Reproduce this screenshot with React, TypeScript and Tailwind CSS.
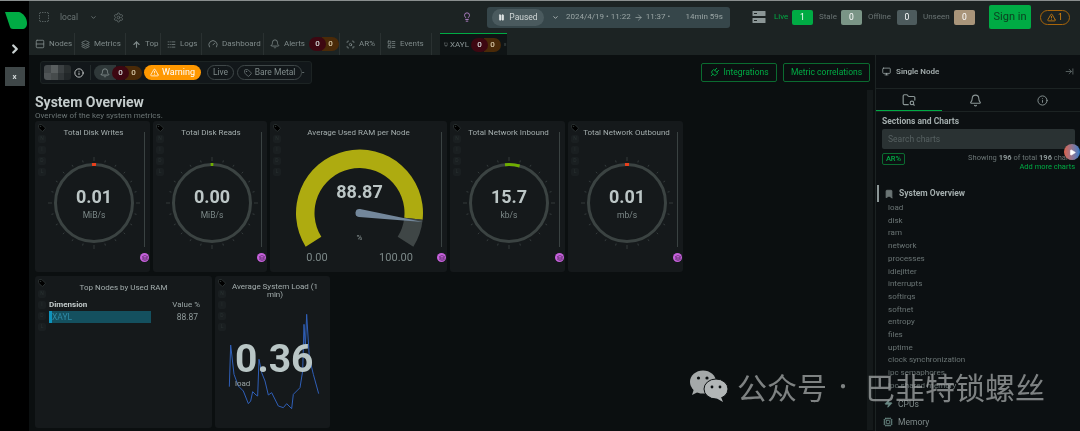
import {
  ArrowRight,
  ArrowRightToLine,
  ArrowUp,
  Bell,
  Bookmark,
  ChevronDown,
  ChevronRight,
  Cpu,
  Gauge,
  Info,
  Layers,
  Lightbulb,
  Logs,
  Pause,
  Play,
  Plug,
  Rows2,
  ScanSearch,
  Settings,
  SquareDashed,
  Tag,
  TriangleAlert,
  Zap,
  LayoutList,
  Monitor,
  GripVertical,
  FolderSearch,
} from "lucide-react";

const font = "font-['Roboto','Noto_Sans_CJK_SC',sans-serif]";

function polar(cx: number, cy: number, r: number, deg: number) {
  const a = (deg * Math.PI) / 180;
  return [cx + r * Math.sin(a), cy - r * Math.cos(a)];
}

function band(cx: number, cy: number, ro: number, ri: number, from: number, to: number) {
  const [x1, y1] = polar(cx, cy, ro, from);
  const [x2, y2] = polar(cx, cy, ro, to);
  const [x3, y3] = polar(cx, cy, ri, to);
  const [x4, y4] = polar(cx, cy, ri, from);
  const large = to - from > 180 ? 1 : 0;
  return `M${x1} ${y1}A${ro} ${ro} 0 ${large} 1 ${x2} ${y2}L${x3} ${y3}A${ri} ${ri} 0 ${large} 0 ${x4} ${y4}Z`;
}

function AlertCounts() {
  return (
    <span className="flex items-center text-[8px] font-medium text-[#d8dcdc]">
      <span className="z-10 flex h-[14px] w-[17px] items-center justify-center rounded-full bg-[#3d0711]">0</span>
      <span className="-ml-[4px] flex h-[14px] w-[17px] items-center justify-center rounded-r-full bg-[#4a2a08] text-[#d9c9a8]">0</span>
    </span>
  );
}

function NavTab({ icon, label, counts, w }: { icon: React.ReactNode; label: string; counts?: boolean; w: string }) {
  return (
    <div className={`flex h-full ${w} shrink-0 items-center gap-[4px] border-r border-[#2a3131] pl-[6px] text-[8px] text-[#7f8a8a]`}>
      {icon}
      <span>{label}</span>
      {counts && <AlertCounts />}
    </div>
  );
}

function SideIcons() {
  return (
    <div className="absolute left-[3px] top-[3px] flex flex-col items-center gap-[3px]">
      <Tag className="h-[8px] w-[8px] fill-black text-[#3a4242]" />
      {["N", "I", "D", "L"].map((k) => (
        <span key={k} className="flex h-[8px] w-[8px] items-center justify-center rounded-[2px] border border-[#20272800] bg-[#1a1f21] text-[5px] text-[#2a3232]">
          {k}
        </span>
      ))}
    </div>
  );
}

function Slider() {
  return (
    <div className="absolute bottom-[10px] right-[1px] top-[11px] flex w-[9px] flex-col items-center justify-between">
      <div className="h-[115px] w-[1px] bg-[#3a4242]" />
      <div className="flex h-[9px] w-[9px] items-center justify-center rounded-full bg-[#c661dc]">
        <Layers className="h-[6px] w-[6px] text-[#2a1530]" />
      </div>
    </div>
  );
}

function RingCard({ title, value, unit, arc, w }: { title: string; value: string; unit: string; arc: [number, number, string]; w: string }) {
  const cx = 50;
  const cy = 50;
  const ticks = Array.from({ length: 24 }, (_, i) => i * 15);
  return (
    <div className={`relative h-[151px] ${w} shrink-0 rounded-[3px] bg-[#15191b]`}>
      <SideIcons />
      <Slider />
      <div className="mt-[6px] pl-[2px] text-center text-[8px] leading-[12px] text-[#a3adad]">{title}</div>
      <div className="mt-[14px] flex justify-center pl-[3px]">
        <svg width="100" height="100" viewBox="0 0 100 100">
          {ticks.map((d) => {
            const major = d % 90 === 0;
            const [x1, y1] = polar(cx, cy, 42, d);
            const [x2, y2] = polar(cx, cy, major ? 46 : 44, d);
            return <line key={d} x1={x1} y1={y1} x2={x2} y2={y2} stroke="#4a5252" strokeWidth="0.6" />;
          })}
          <circle cx={cx} cy={cy} r="38.5" fill="none" stroke="#3b4342" strokeWidth="3" />
          <path d={band(cx, cy, 40, 37, arc[0], arc[1])} fill={arc[2]} />
          <text x={cx} y={cy} textAnchor="middle" fontSize="18" fontWeight="700" fill="#bcc6c6">
            {value}
          </text>
          <text x={cx} y={cy + 15} textAnchor="middle" fontSize="8.5" fill="#7c8888">
            {unit}
          </text>
        </svg>
      </div>
    </div>
  );
}

function RamGauge() {
  const cx = 89.5;
  const cy = 74;
  const start = -122;
  const end = 96;
  const [tx, ty] = polar(cx, cy, 64, 98);
  const [bx, by] = polar(cx, cy, 4, 8);
  const [cx2, cy2] = polar(cx, cy, 4, 188);
  return (
    <div className="relative h-[151px] w-[177px] shrink-0 rounded-[3px] bg-[#15191b]">
      <SideIcons />
      <Slider />
      <div className="mt-[6px] text-center text-[8px] leading-[12px] text-[#a3adad]">Average Used RAM per Node</div>
      <svg width="177" height="133" viewBox="0 0 177 133" className="block">
        <path d={band(cx, cy, 63.5, 45, start, end)} fill="#aeab10" />
        <path d={band(cx, cy, 63.5, 45, end, 122)} fill="#3f4646" />
        <path d={`M${bx} ${by}L${tx} ${ty}L${cx2} ${cy2}A4 4 0 0 1 ${bx} ${by}Z`} fill="#73879b" />
        <text x={cx} y="59" textAnchor="middle" fontSize="18" fontWeight="700" fill="#bcc6c6">88.87</text>
        <text x={cx} y="101" textAnchor="middle" fontSize="8" fill="#8b9696">%</text>
        <text x="47" y="122" textAnchor="middle" fontSize="11" fill="#7c8888">0.00</text>
        <text x="126" y="122" textAnchor="middle" fontSize="11" fill="#7c8888">100.00</text>
      </svg>
    </div>
  );
}

const loadPoints = [
  [598, 347], [602, 222], [612, 310], [625, 345], [640, 360], [655, 398], [662, 390], [668, 362], [678, 372], [683, 375],
  [687, 265], [695, 305], [705, 330], [715, 372], [725, 365], [745, 405], [760, 410], [770, 398], [785, 413], [790, 370],
  [810, 350], [818, 300], [822, 160], [826, 230], [830, 130], [838, 260], [850, 310], [866, 368],
];

function LoadCard() {
  const pts = loadPoints.map(([x, y]) => `${x / 3 + 30 - 215},${y / 3 + 270 - 275 - 32}`).join(" ");
  return (
    <div className="relative h-[152px] w-[115px] shrink-0 rounded-[3px] bg-[#15191b]">
      <SideIcons />
      <div className="ml-[12px] mt-[7px] w-[94px] pl-[2px] text-center text-[8px] leading-[8px] text-[#a3adad]">Average System Load (1 min)</div>
      <svg width="115" height="120" viewBox="0 0 115 120" className="mt-[9px] block">
        <polyline points={pts} fill="none" stroke="#2f5fb8" strokeWidth="1" />
      </svg>
      <div className="absolute left-[20px] top-[60px] text-[39px] font-bold leading-[46px] text-[#b9c6c6]">0.36</div>
      <div className="absolute left-[20px] top-[102px] text-[8px] text-[#9aa5a5]">load</div>
    </div>
  );
}

function TopNodesCard() {
  return (
    <div className="relative h-[152px] w-[177px] shrink-0 rounded-[3px] bg-[#15191b]">
      <SideIcons />
      <div className="mt-[6px] text-center text-[8px] leading-[12px] text-[#a3adad]">Top Nodes by Used RAM</div>
      <div className="ml-[14px] mr-[12px] mt-[5px]">
        <div className="flex items-center justify-between text-[8px] leading-[11px]">
          <span className="font-bold text-[#c4cccc]">Dimension</span>
          <span className="text-[#9aa5a5]">Value %</span>
        </div>
        <div className="mt-[1px] flex items-center justify-between">
          <div className="flex h-[12px] w-[102px] items-center border-l-[3px] border-[#0e93bd] bg-[#14505f] text-[8.5px] text-[#2e8aa6]">XAYL</div>
          <span className="pr-[2px] text-[8.5px] text-[#8f9a9a]">88.87</span>
        </div>
      </div>
    </div>
  );
}

const sections = ["load", "disk", "ram", "network", "processes", "idlejitter", "interrupts", "softirqs", "softnet", "entropy", "files", "uptime", "clock synchronization", "ipc semaphores", "ipc shared memory"];

export default function App() {
  return (
    <div className={`${font} relative flex h-[431px] w-[1080px] overflow-hidden border-t border-[#8a8f8f] bg-[#0b0f10] blur-[0.3px]`}>
      {/* left rail */}
      <div className="flex w-[29px] shrink-0 flex-col items-center bg-black pt-[11px]">
        <svg width="24" height="18" viewBox="0 0 24 18">
          <path d="M2 0H16C20 1 24 6 24 11C24 15 22 17 19 17H10C8 17 7.500 16 7 15Z" fill="#00ab44" />
        </svg>
        <ChevronRight className="mt-[12px] h-[14px] w-[14px] text-[#c8d0d0]" strokeWidth={4} />
        <div className="mt-[11px] flex h-[19px] w-[20px] items-center justify-center bg-[#3f4748] text-[8px] font-bold text-[#d0d6d6]">x</div>
      </div>

      <div className="flex min-w-0 flex-1 flex-col">
        {/* top bar */}
        <div className="flex h-[32px] shrink-0 items-center bg-[#1c2323] pl-[9px] text-[8.5px] text-[#6b7575]">
          <SquareDashed className="h-[12px] w-[12px] text-[#5d6767]" />
          <span className="ml-[10px] w-[17px]">local</span>
          <ChevronDown className="ml-[13px] h-[7px] w-[7px]" strokeWidth={3} />
          <Settings className="ml-[16px] h-[11px] w-[11px] text-[#5d6767]" />
          <Lightbulb className="ml-[338px] h-[10px] w-[10px] text-[#c08ad8]" />
          <div className="ml-[15px] flex h-[21px] w-[243px] items-center rounded-[3px] bg-[#36464a]">
            <div className="ml-[5px] flex h-[17px] w-[52px] items-center justify-center gap-[4px] rounded-full bg-[#4a5a5e] text-[8.5px] text-[#d0d6d6]">
              <Pause className="h-[7px] w-[7px] fill-[#e8ecec] text-[#e8ecec]" />
              Paused
            </div>
            <ChevronDown className="ml-[8px] h-[7px] w-[7px] text-[#b4bcbc]" strokeWidth={3} />
            <span className="ml-[7px] flex items-center gap-[3px] whitespace-nowrap text-[8px] text-[#9aa5a5]">
              2024/4/19 • 11:22 <ArrowRight className="h-[9px] w-[9px]" /> 11:37 •
            </span>
            <span className="ml-auto mr-[7px] whitespace-nowrap text-[8px] text-[#9aa5a5]">14min 59s</span>
          </div>
          <svg width="14" height="14" viewBox="0 0 14 14" className="ml-[22px] shrink-0">
            <rect x="0.500" y="1" width="13" height="5" rx="0.500" fill="#8b9696" />
            <rect x="0.500" y="8" width="13" height="5" rx="0.500" fill="#8b9696" />
            <rect x="2" y="3" width="3" height="1" fill="#1c2323" />
            <rect x="2" y="10" width="3" height="1" fill="#1c2323" />
          </svg>
          <span className="ml-[8px] w-[18px] text-[8px] text-[#00ab44]">Live</span>
          <span className="flex h-[15px] w-[21px] items-center justify-center rounded-[2px] bg-[#00ab44] text-[8.5px] text-white">1</span>
          <span className="ml-[6px] w-[22px] text-[8px]">Stale</span>
          <span className="flex h-[15px] w-[21px] items-center justify-center rounded-[2px] bg-[#7a9586] text-[8.5px] text-white">0</span>
          <span className="ml-[6px] w-[29px] text-[8px]">Offline</span>
          <span className="flex h-[15px] w-[20px] items-center justify-center rounded-[2px] bg-[#4d5b5d] text-[8.5px] text-white">0</span>
          <span className="ml-[6px] w-[31px] text-[8px]">Unseen</span>
          <span className="flex h-[15px] w-[21px] items-center justify-center rounded-[2px] bg-[#a9957a] text-[8.5px] text-white">0</span>
          <button className="ml-[14px] h-[24px] w-[42px] rounded-[2px] bg-[#00ab44] text-[11px] text-[#0b3d1f]">Sign in</button>
          <span className="ml-[9px] flex h-[15px] w-[30px] items-center justify-center gap-[2px] rounded-full border border-[#a8650a] text-[8.5px] text-[#e08a10]">
            <TriangleAlert className="h-[9px] w-[9px]" />1
          </span>
        </div>

        {/* nav tabs */}
        <div className="flex h-[22px] shrink-0 items-stretch bg-[#1c2323]">
          <NavTab w="w-[46px]" icon={<Rows2 className="h-[10px] w-[10px]" />} label="Nodes" />
          <NavTab w="w-[51px]" icon={<Layers className="h-[9px] w-[9px]" />} label="Metrics" />
          <NavTab w="w-[35px]" icon={<ArrowUp className="h-[9px] w-[9px]" strokeWidth={3} />} label="Top" />
          <NavTab w="w-[41px]" icon={<Logs className="h-[9px] w-[9px]" />} label="Logs" />
          <NavTab w="w-[62px]" icon={<Gauge className="h-[10px] w-[10px]" />} label="Dashboard" />
          <NavTab w="w-[76px]" icon={<Bell className="h-[10px] w-[10px]" />} label="Alerts" counts />
          <NavTab w="w-[41px]" icon={<ScanSearch className="h-[9px] w-[9px]" />} label="AR%" />
          <NavTab w="w-[51px]" icon={<LayoutList className="h-[9px] w-[9px]" />} label="Events" />
          <div className="ml-[8px] flex w-[67px] items-center gap-[2px] border-t border-[#00ab44] bg-[#0f1415] pl-[4px] text-[8px] text-[#8b9696]">
            <Monitor className="h-[9px] w-[9px]" />
            <span>XAYL</span>
            <AlertCounts />
            <GripVertical className="h-[9px] w-[9px] text-[#4a5252]" />
          </div>
        </div>

        <div className="flex min-h-0 flex-1">
          {/* main column */}
          <div className="w-[836px] shrink-0 pl-[6px]">
            <div className="flex h-[35px] items-center justify-between">
              <div className="ml-[5px] flex h-[23px] w-[272px] items-center gap-[3px] rounded-[3px] border border-[#1c2323] bg-[#12171a] pl-[3px] text-[8.5px] text-[#7f8a8a]">
                <div className="grid h-[15px] w-[27px] grid-cols-4 grid-rows-2 overflow-hidden rounded-[3px] opacity-70">
                  <span className="bg-[#5a5f60]" /><span className="bg-[#777c7d]" /><span className="bg-[#4d5253]" /><span className="bg-[#333839]" />
                  <span className="bg-[#6a6f70]" /><span className="bg-[#5c6162]" /><span className="bg-[#3f4445]" /><span className="bg-[#2a2f30]" />
                </div>
                <Info className="h-[10px] w-[10px] text-[#d8dcdc]" />
                <div className="ml-[3px] flex items-center border-l border-[#242b2c] pl-[3px]">
                  <span className="flex h-[15px] w-[22px] items-center justify-center rounded-l-full bg-[#2f3839]">
                    <Bell className="h-[10px] w-[10px] text-[#8b9696]" />
                  </span>
                  <div className="-ml-[4px]"><AlertCounts /></div>
                </div>
                <span className="-ml-[1px] flex h-[15px] w-[57px] items-center justify-center gap-[3px] rounded-full bg-[#ff9800] text-[9px] text-white">
                  <TriangleAlert className="h-[9px] w-[9px]" /> Warning
                </span>
                <span className="ml-[3px] flex h-[15px] w-[27px] items-center justify-center rounded-full border border-[#3f4748] text-[8.5px]">Live</span>
                <span className="flex h-[15px] w-[65px] items-center justify-center gap-[3px] rounded-full border border-[#3f4748] text-[8.5px]">
                  <Tag className="h-[8px] w-[8px]" /> Bare Metal
                </span>
                <span className="-ml-[3px]">-</span>
              </div>
              <div className="-mr-[5px] flex gap-[6px] text-[8.5px] text-[#00ab44]">
                <div className="flex h-[19px] w-[76px] items-center justify-center gap-[3px] rounded-[2px] border border-[#0b6b30]">
                  <Plug className="h-[11px] w-[11px] rotate-45" /> Integrations
                </div>
                <div className="flex h-[19px] w-[87px] items-center justify-center rounded-[2px] border border-[#0b6b30]">Metric correlations</div>
              </div>
            </div>
            <h1 className="mt-[3px] text-[14px] font-bold leading-[18px] text-[#c4cccc]">System Overview</h1>
            <p className="mt-[1px] text-[8px] leading-[8px] text-[#6b7575]">Overview of the key system metrics.</p>
            <div className="mt-[1px] flex gap-[3px]">
              <RingCard title="Total Disk Writes" value="0.01" unit="MiB/s" arc={[-3, 3, "#e8401c"]} w="w-[115px]" />
              <RingCard title="Total Disk Reads" value="0.00" unit="MiB/s" arc={[-2, 2, "#6fae00"]} w="w-[114px]" />
              <RamGauge />
              <RingCard title="Total Network Inbound" value="15.7" unit="kb/s" arc={[-6, 16, "#6fae00"]} w="w-[115px]" />
              <RingCard title="Total Network Outbound" value="0.01" unit="mb/s" arc={[-3, 3, "#e8401c"]} w="w-[115px]" />
            </div>
            <div className="mt-[4px] flex gap-[3px]">
              <TopNodesCard />
              <LoadCard />
            </div>
          </div>

          {/* scrollbar */}
          <div className="ml-[2px] mr-[2px] mt-[35px] h-[340px] w-[6px] shrink-0 bg-[#14191a]" />

          {/* sidebar */}
          <div className="relative w-[205px] shrink-0 border-l border-[#1c2323] bg-[#0c1012]">
            <div className="flex h-[34px] items-center gap-[5px] border-b border-[#1c2323] pl-[6px] pr-[6px] text-[8px] font-semibold text-[#a3adad]">
              <Monitor className="h-[9px] w-[9px]" />
              Single Node
              <ArrowRightToLine className="ml-auto h-[9px] w-[9px] text-[#6b7575]" />
            </div>
            <div className="flex h-[23px] border-b border-[#1c2323]">
              <div className="flex w-[66px] items-center justify-center border-b border-[#00ab44] text-[#8b9696]">
                <FolderSearch className="h-[14px] w-[14px]" />
              </div>
              <div className="flex w-[67px] items-center justify-center text-[#8b9696]">
                <Bell className="h-[13px] w-[13px]" />
              </div>
              <div className="flex w-[67px] items-center justify-center text-[#8b9696]">
                <Info className="h-[11px] w-[11px]" />
              </div>
            </div>
            <div className="pl-[6px] pr-[5px] pt-[3px]">
              <div className="text-[8.5px] font-bold leading-[12px] text-[#a3adad]">Sections and Charts</div>
              <div className="mt-[2px] flex h-[20px] items-center rounded-[2px] bg-[#2a3233] px-[6px] text-[8.5px] text-[#566061]">Search charts</div>
              <div className="mt-[4px] flex items-start justify-between">
                <span className="flex h-[12px] w-[23px] items-center justify-center rounded-[2px] border border-[#0b6b30] text-[7.5px] font-medium text-[#00ab44]">AR%</span>
                <div className="text-right text-[7.5px] leading-[9px] text-[#6b7575]">
                  <div>Showing <b className="text-[#8b9696]">196</b> of total <b className="text-[#8b9696]">196</b> charts</div>
                  <div className="text-[#00ab44]">Add more charts</div>
                </div>
              </div>
              <div className="-ml-[5px] mt-[14px] flex h-[17px] items-center gap-[5px] border-l-2 border-[#8b9696] pl-[5px] text-[8.5px] font-bold text-[#a3adad]">
                <Bookmark className="h-[10px] w-[10px] fill-[#6b7575] text-[#6b7575]" /> System Overview
              </div>
              <ul className="pl-[6px] text-[8px] leading-[12.7px] text-[#6b7575]">
                {sections.map((s) => (
                  <li key={s}>{s}</li>
                ))}
              </ul>
              <div className="mt-[5px] flex items-center gap-[5px] pl-[2px] text-[8.5px] leading-[12px] text-[#7f8a8a]">
                <Zap className="h-[9px] w-[9px] fill-[#6b8a86] text-[#6b8a86]" /> CPUs
              </div>
              <div className="mt-[6px] flex items-center gap-[5px] pl-[1px] text-[8.5px] leading-[12px] text-[#7f8a8a]">
                <Cpu className="h-[10px] w-[10px] text-[#6b8a86]" /> Memory
              </div>
            </div>
            <div className="absolute left-[188px] top-[89px] flex h-[16px] w-[16px] items-center justify-center rounded-full bg-gradient-to-r from-[#d9604a] to-[#2a78c8]">
              <Play className="h-[7px] w-[7px] fill-white text-white" />
            </div>
          </div>
        </div>
      </div>

      {/* watermark */}
      <div className="absolute left-[690px] top-[368px] flex items-center gap-[9px] text-[#a5a9a9]">
        <svg width="38" height="34" viewBox="0 0 38 34" className="shrink-0">
          <ellipse cx="13" cy="13" rx="13" ry="11.500" fill="#a5a9a9" />
          <path d="M4 20L2 26L10 22Z" fill="#a5a9a9" />
          <ellipse cx="26" cy="20" rx="12" ry="10" fill="#b2b6b6" stroke="#0b0f10" strokeWidth="1" />
          <path d="M31 28L33 33L26 29Z" fill="#b2b6b6" />
          <circle cx="8.500" cy="9" r="1.600" fill="#0b0f10" />
          <circle cx="17" cy="9" r="1.600" fill="#0b0f10" />
          <circle cx="22" cy="18" r="1.400" fill="#0b0f10" />
          <circle cx="30" cy="18" r="1.400" fill="#0b0f10" />
        </svg>
        <div className="flex whitespace-nowrap font-['Noto_Sans_CJK_SC',sans-serif] text-[30px] leading-[34px] opacity-75">
          <span>公众号</span>
          <span className="w-[38px] pr-[6px] text-center text-[20px]">·</span>
          <span>巴韭特锁螺丝</span>
        </div>
      </div>
    </div>
  );
}
